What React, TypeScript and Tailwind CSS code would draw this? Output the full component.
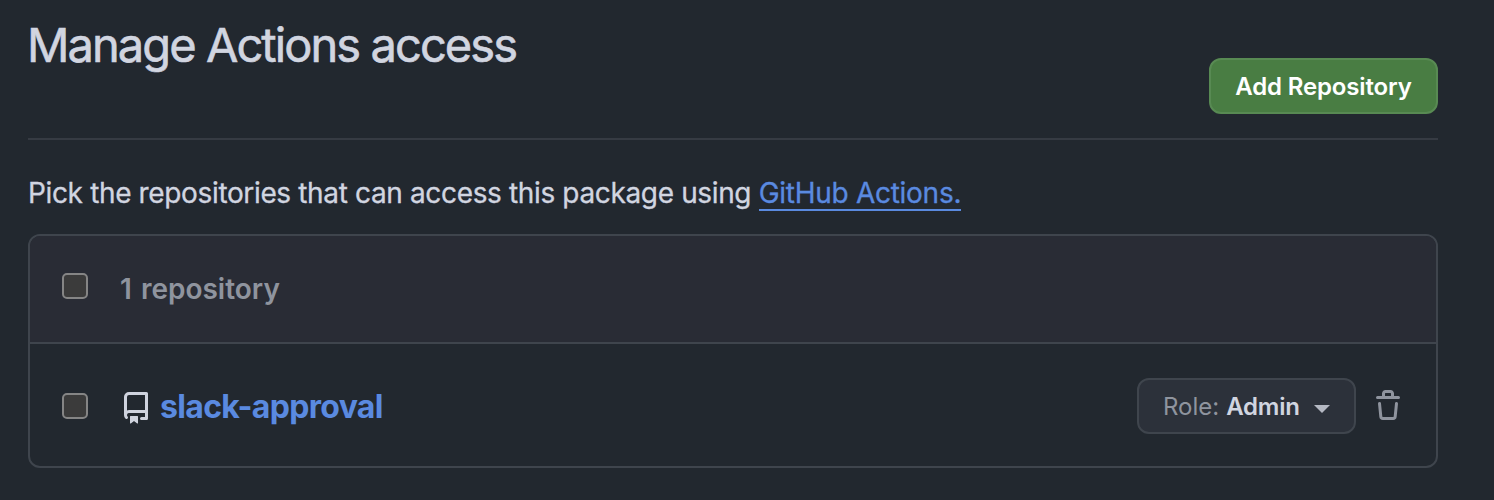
function RepoIcon() {
  return (
    <svg viewBox="0 0 16 16" className="mt-[3px] size-8 shrink-0 fill-[#cfd3de]" aria-hidden="true">
      <path d="M2 2.5A2.5 2.5 0 0 1 4.5 0h8.75a.75.75 0 0 1 .75.75v12.5a.75.75 0 0 1-.75.75h-2.5a.75.75 0 0 1 0-1.5h1.75v-2h-8a1 1 0 0 0-.714 1.7.75.75 0 1 1-1.072 1.05A2.495 2.495 0 0 1 2 11.5Zm10.5-1h-8a1 1 0 0 0-1 1v6.708A2.486 2.486 0 0 1 4.5 9h8ZM5 12.25a.25.25 0 0 1 .25-.25h3.5a.25.25 0 0 1 .25.25v3.25a.25.25 0 0 1-.4.2l-1.45-1.087a.249.249 0 0 0-.3 0L5.4 15.7a.25.25 0 0 1-.4-.2Z" />
    </svg>
  );
}

function TrashIcon() {
  return (
    <svg viewBox="0 0 16 16" className="size-8 shrink-0 fill-[#8f949e]" aria-hidden="true">
      <path d="M11 1.75V3h2.25a.75.75 0 0 1 0 1.5H2.75a.75.75 0 0 1 0-1.5H5V1.75C5 .784 5.784 0 6.75 0h2.5C10.216 0 11 .784 11 1.75ZM4.496 6.675l.66 6.6a.25.25 0 0 0 .249.225h5.19a.25.25 0 0 0 .249-.225l.66-6.6a.75.75 0 0 1 1.492.149l-.66 6.6A1.748 1.748 0 0 1 10.595 15h-5.19a1.75 1.75 0 0 1-1.741-1.575l-.66-6.6a.75.75 0 1 1 1.492-.15ZM6.5 1.75V3h3V1.75a.25.25 0 0 0-.25-.25h-2.5a.25.25 0 0 0-.25.25Z" />
    </svg>
  );
}

function Checkbox() {
  return (
    <input
      type="checkbox"
      className="size-[26px] shrink-0 appearance-none rounded-[5px] border-2 border-[#858585] bg-[#3b3b3b]"
    />
  );
}

export default function App() {
  return (
    <main className="h-[500px] w-full bg-[#22282f] pl-7 pr-14 font-['Inter',sans-serif] text-[#d1d5e0]">
      <header className="flex h-[140px] items-start justify-between border-b-2 border-[#363b43]">
        <h1 className="mt-4 -ml-px whitespace-nowrap text-[47px] leading-[58px] font-normal tracking-[-1.93px] [-webkit-text-stroke:0.6px_#d1d5e0]">
          Manage Actions access
        </h1>
        <button className="mt-[58px] flex h-14 w-[229px] items-center justify-center rounded-xl border-2 border-[#588a53] bg-[#497d43] pt-0.5 whitespace-nowrap text-2xl font-semibold tracking-[-0.15px] text-white">
          Add Repository
        </button>
      </header>

      <p className="mt-8 h-[62px] whitespace-nowrap text-[28px] leading-[42px] font-normal tracking-[-0.355px] [-webkit-text-stroke:0.3px_currentColor]">
        Pick the repositories that can access this package using{" "}
        <a className="inline-block border-b-2 border-[#5a8ae0] leading-[32px] tracking-[-0.28px] text-[#5a8ae0] [-webkit-text-stroke:0.3px_#5a8ae0]">
          GitHub Actions.
        </a>
      </p>

      <section className="h-[234px] overflow-hidden rounded-xl border-2 border-[#3f454d]">
        <div className="flex h-[108px] items-start border-b-2 border-[#3f454d] bg-[#292c35] pt-[37px] pl-8">
          <Checkbox />
          <span className="-mt-[5px] ml-8 whitespace-nowrap text-[28px] leading-[42px] font-semibold [word-spacing:2px] text-[#8f949e]">
            1 repository
          </span>
        </div>
        <div className="flex h-[122px] items-center pt-0.5 pr-8 pl-8">
          <Checkbox />
          <div className="ml-8 flex items-center gap-2">
            <RepoIcon />
            <a className="mt-px whitespace-nowrap text-[32px] leading-[48px] font-bold tracking-[-0.66px] text-[#5a8ae0]">
              slack-approval
            </a>
          </div>
          <button className="ml-auto flex h-14 w-[219px] items-center rounded-xl border-2 border-[#3f454d] bg-[#2c313a] pt-0.5 pl-6 whitespace-nowrap text-2xl">
            <span className="text-[#8f949e]">Role:</span>
            <span className="ml-[7px] font-semibold tracking-[-0.25px]">Admin</span>
            <svg viewBox="0 0 16 8" className="mt-[3px] ml-[14px] h-2 w-4 fill-[#b4b8c2]" aria-hidden="true">
              <path d="M0 0h16L8 8Z" />
            </svg>
          </button>
          <button className="ml-4">
            <TrashIcon />
          </button>
        </div>
      </section>
    </main>
  );
}
